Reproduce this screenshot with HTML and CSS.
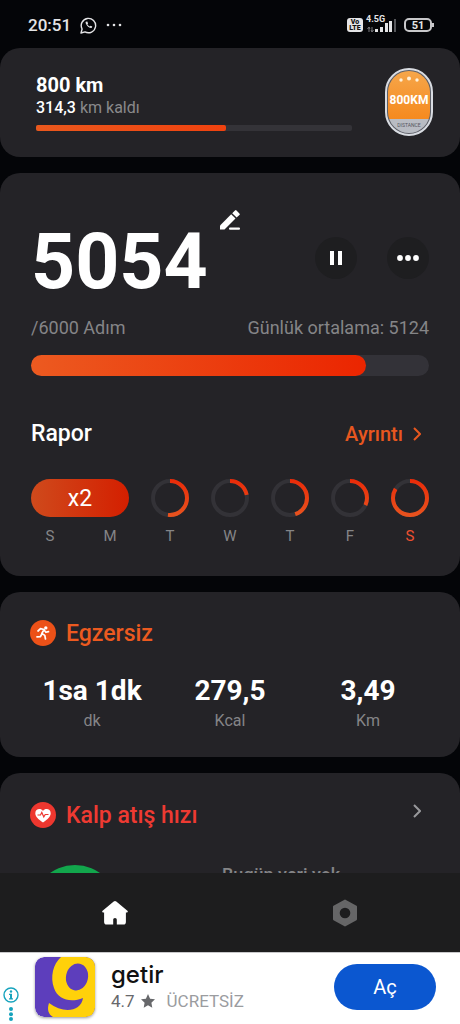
FILE: index.html
```html
<!DOCTYPE html>
<html lang="tr">
<head>
    <meta charset="UTF-8">
    <meta name="viewport" content="width=device-width, initial-scale=1.0">
    <title>Adım Sayar</title>
    <link rel="stylesheet" href="styles.css">
</head>
<body>
    <!-- shared gradient for the day rings -->
    <svg class="defs" width="0" height="0" aria-hidden="true">
        <linearGradient id="ring-gradient" gradientUnits="userSpaceOnUse" x1="0" y1="0" x2="38" y2="0">
            <stop offset="0" stop-color="#e8541f"/>
            <stop offset="1" stop-color="#ea2a08"/>
        </linearGradient>
    </svg>

    <header class="status-bar">
        <span class="status-time">20:51</span>
        <svg class="status-whatsapp" width="17" height="17" viewBox="0 0 17 17" fill="none" stroke="#e4e4e6" stroke-width="1.4">
            <path d="M1 16l1.100-4A7.200 7.200 0 1 1 5 14.900z" stroke-linejoin="round"/>
            <path d="M5.800 4.700c-1.300 1.500 3.300 7.200 5.800 6.200l.7-1.300-1.700-.9-.9.800c-1-.4-1.900-1.300-2.300-2.200l.7-.9-.8-1.800z" fill="#e4e4e6" stroke="none"/>
        </svg>
        <svg width="16" height="4" viewBox="0 0 16 4" fill="#e4e4e6">
            <circle cx="2" cy="2" r="1.300"/><circle cx="8" cy="2" r="1.300"/><circle cx="14" cy="2" r="1.300"/>
        </svg>
        <div class="status-right">
            <span class="volte">Vo<br>LTE</span>
            <div class="signal">
                <span class="signal-type">4.5G</span>
                <svg width="31" height="16" viewBox="0 0 31 16" fill="#e4e4e6">
                    <path d="M3 10v5M1.500 12L3 10l1 2M6 10v5M5 13l1 2 1.500-2" fill="none" stroke="#77777b"/>
                    <rect x="9" y="12" width="3" height="3"/>
                    <rect x="14" y="10" width="3" height="5"/>
                    <rect x="19" y="6" width="3" height="9"/>
                    <rect x="23" y="4" width="3" height="11"/>
                    <rect x="28" y="2" width="2" height="13" fill="#55565a"/>
                </svg>
            </div>
            <span class="battery">51</span>
        </div>
    </header>

    <main class="content">
        <section class="card goal">
            <div class="goal-info">
                <h2>800 km</h2>
                <p><b>314,3</b> km kaldı</p>
                <div class="goal-bar"><div class="goal-fill" style="width: 60%"></div></div>
            </div>
            <svg class="badge" width="48" height="68" viewBox="0 0 48 68" role="img" aria-label="800KM">
                <defs>
                    <linearGradient id="badge-orange" x1="0" y1="0" x2="0" y2="1">
                        <stop offset="0" stop-color="#f6a64a"/>
                        <stop offset="1" stop-color="#f58a1f"/>
                    </linearGradient>
                    <clipPath id="badge-clip"><rect x="3" y="3" width="42" height="62" rx="21"/></clipPath>
                </defs>
                <rect x="1" y="1" width="46" height="66" rx="23" fill="#5c5e66" stroke="#d9dce2" stroke-width="2"/>
                <g clip-path="url(#badge-clip)">
                    <rect x="3" y="3" width="42" height="48" fill="url(#badge-orange)"/>
                    <rect x="3" y="51" width="42" height="15" fill="#b9bcc3"/>
                </g>
                <circle cx="16" cy="12" r="1.700" fill="#fff0d8"/>
                <circle cx="24" cy="10.500" r="2" fill="#fff0d8"/>
                <circle cx="32" cy="12" r="1.700" fill="#fff0d8"/>
                <text class="badge-km" x="24" y="36" text-anchor="middle">800KM</text>
                <text class="badge-label" x="24" y="59" text-anchor="middle">DISTANCE</text>
            </svg>
        </section>

        <section class="card steps">
            <div class="steps-top">
                <h1 class="steps-count">5054</h1>
                <button type="button" class="edit-button" aria-label="Düzenle">
                    <svg width="20" height="20" viewBox="0 0 20 20" fill="#fff">
                        <path d="M0 15.500L11.200 4.300l4.300 4.300L4.500 19.600H0z"/>
                        <path d="M12.200 3.300l2.800-2.800a1 1 0 0 1 1.500 0l2.900 2.900a1 1 0 0 1 0 1.500l-2.800 2.700z"/>
                        <rect x="9" y="17.500" width="11" height="2.300" rx="1"/>
                    </svg>
                </button>
                <div class="steps-actions">
                    <button type="button" class="round-button" aria-label="Duraklat">
                        <svg width="14" height="14" viewBox="0 0 14 14" fill="#fff">
                            <rect x="1" y="0" width="4" height="14"/><rect x="9" y="0" width="4" height="14"/>
                        </svg>
                    </button>
                    <button type="button" class="round-button" aria-label="Diğer">
                        <svg width="22" height="6" viewBox="0 0 22 6" fill="#fff">
                            <circle cx="3" cy="3" r="2.900"/><circle cx="11" cy="3" r="2.900"/><circle cx="19" cy="3" r="2.900"/>
                        </svg>
                    </button>
                </div>
            </div>
            <div class="steps-meta">
                <span>/6000 Adım</span>
                <span>Günlük ortalama: 5124</span>
            </div>
            <div class="steps-bar"><div class="steps-fill" style="width: 84.2%"></div></div>

            <div class="report-head">
                <h2>Rapor</h2>
                <a href="#">Ayrıntı
                    <svg width="8" height="14" viewBox="0 0 8 14" fill="none" stroke="#e8571f" stroke-width="2"><path d="M1 1l6 6-6 6"/></svg>
                </a>
            </div>
            <div class="week">
                <div class="streak">x2</div>
                <svg class="ring" viewBox="0 0 38 38"><circle cx="19" cy="19" r="17"/><circle class="ring-value" cx="19" cy="19" r="17" pathLength="100" stroke-dasharray="52 100"/></svg>
                <svg class="ring" viewBox="0 0 38 38"><circle cx="19" cy="19" r="17"/><circle class="ring-value" cx="19" cy="19" r="17" pathLength="100" stroke-dasharray="22 100"/></svg>
                <svg class="ring" viewBox="0 0 38 38"><circle cx="19" cy="19" r="17"/><circle class="ring-value" cx="19" cy="19" r="17" pathLength="100" stroke-dasharray="45 100"/></svg>
                <svg class="ring" viewBox="0 0 38 38"><circle cx="19" cy="19" r="17"/><circle class="ring-value" cx="19" cy="19" r="17" pathLength="100" stroke-dasharray="32 100"/></svg>
                <svg class="ring" viewBox="0 0 38 38"><circle cx="19" cy="19" r="17"/><circle class="ring-value" cx="19" cy="19" r="17" pathLength="100" stroke-dasharray="84 100"/></svg>
                <span class="day">S</span>
                <span class="day">M</span>
                <span class="day">T</span>
                <span class="day">W</span>
                <span class="day">T</span>
                <span class="day">F</span>
                <span class="day today">S</span>
            </div>
        </section>

        <section class="card exercise">
            <div class="card-title">
                <svg width="26" height="26" viewBox="0 0 26 26">
                    <circle cx="13" cy="13" r="13" fill="#ec5118"/>
                    <circle cx="15.800" cy="7.900" r="1.700" fill="#fff"/>
                    <path d="M8 11l2.500-2.300 3.600.8-2.300 4 3 1.900.7 3.600M11.600 14.500l-1.300 2.200-3.300.2M14.300 10.300l1.600 2 2.600-.7" fill="none" stroke="#fff" stroke-width="1.700" stroke-linecap="round" stroke-linejoin="round"/>
                </svg>
                <h2>Egzersiz</h2>
            </div>
            <div class="stats">
                <div class="stat"><strong>1sa 1dk</strong><span>dk</span></div>
                <div class="stat"><strong>279,5</strong><span>Kcal</span></div>
                <div class="stat"><strong>3,49</strong><span>Km</span></div>
            </div>
        </section>

        <section class="card heart">
            <div class="card-title">
                <svg width="26" height="26" viewBox="0 0 26 26">
                    <circle cx="13" cy="13" r="13" fill="#ee372f"/>
                    <path d="M13 20.500C8 17 5.300 14.300 5.300 11.200c0-4.400 5.500-5.400 7.700-2.200 2.200-3.200 7.700-2.200 7.700 2.200 0 3.100-2.700 5.800-7.700 9.300z" fill="#fff"/>
                    <path d="M7.500 13h3l1.300-2.500 2 4.500 1.400-2.500h3.300" fill="none" stroke="#ee372f" stroke-width="1.200"/>
                </svg>
                <h2>Kalp atış hızı</h2>
                <svg class="chevron" width="8" height="14" viewBox="0 0 8 14" fill="none" stroke="#98989b" stroke-width="2"><path d="M1 1l6 6-6 6"/></svg>
            </div>
            <div class="heart-body">
                <div class="heart-dial"></div>
                <p>Bugün veri yok</p>
            </div>
        </section>
    </main>

    <nav class="tab-bar">
        <button type="button" aria-label="Ana sayfa">
            <svg width="26" height="24" viewBox="0 0 26 24" fill="#fff">
                <path d="M11.700.6a2 2 0 0 1 2.600 0L25.400 9.800c.8.8.4 1.600-.5 1.600h-1V21c0 1.700-.9 2.600-2.500 2.600h-6.600v-4.600c0-1.200-.7-1.900-1.800-1.900s-1.800.7-1.800 1.900v4.600H4.700c-1.600 0-2.600-.9-2.600-2.600v-9.600h-1c-.9 0-1.300-.8-.5-1.600z"/>
            </svg>
        </button>
        <button type="button" aria-label="Ayarlar">
            <svg width="26" height="28" viewBox="0 0 26 28">
                <path d="M13 1.500L24 7.700v12.600L13 26.500 2 20.300V7.700z" fill="#666667" stroke="#666667" stroke-width="2" stroke-linejoin="round"/>
                <circle cx="13" cy="14" r="5.300" fill="#1d1d1e"/>
            </svg>
        </button>
    </nav>

    <aside class="ad">
        <div class="ad-choices">
            <svg width="16" height="34" viewBox="0 0 16 34" fill="#16a3bd">
                <circle cx="8" cy="8" r="7" fill="none" stroke="#16a3bd" stroke-width="1.400"/>
                <circle cx="8" cy="4.500" r="1.200"/>
                <path d="M6 6.800h3v4.400h1v1.200H6v-1.200h1V8H6z"/>
                <circle cx="8" cy="22" r="2"/><circle cx="8" cy="27.200" r="2"/><circle cx="8" cy="32" r="2"/>
            </svg>
        </div>
        <svg class="ad-logo" width="60" height="60" viewBox="0 0 60 60" role="img" aria-label="getir">
            <defs><clipPath id="logo-clip"><rect width="60" height="60" rx="9"/></clipPath></defs>
            <g clip-path="url(#logo-clip)">
                <rect width="60" height="60" fill="#5d3ebc"/>
                <path d="M60 0H26C18 7 15 20 19 31c4 12 17 15 29 10-2 14-20 16-34 5-2 6-1 11 4 14h42z" fill="#ffd10a"/>
                <ellipse cx="42" cy="20" rx="11" ry="13.500" transform="rotate(12 42 20)" fill="#5d3ebc"/>
            </g>
        </svg>
        <div class="ad-text">
            <strong>getir</strong>
            <p>
                <span>4.7</span>
                <svg width="14" height="14" viewBox="0 0 14 14" fill="#67686b"><path d="M7 0l2.100 4.700 4.900.6-3.600 3.400.9 5L7 11.200l-4.300 2.500.9-5L0 5.300l4.900-.6z"/></svg>
                <span class="ad-price">ÜCRETSİZ</span>
            </p>
        </div>
        <button type="button" class="ad-button">Aç</button>
    </aside>
</body>
</html>
```
FILE: styles.css
```css
* {
    box-sizing: border-box;
}

body {
    margin: 0;
    height: 100vh;
    display: flex;
    flex-direction: column;
    background-color: #040508;
    color: #fff;
    font-family: Roboto, "Noto Sans", sans-serif;
    overflow: hidden;
}

h1, h2, p {
    margin: 0;
}

button {
    border: 0;
    padding: 0;
    background: none;
    font-family: inherit;
    cursor: pointer;
}

svg {
    display: block;
    flex: none;
}

.defs {
    position: absolute;
}

/* status bar */
.status-bar {
    flex: none;
    height: 48px;
    padding: 2px 28px 0;
    display: flex;
    align-items: center;
    gap: 9px;
    color: #e4e4e6;
}

.status-time {
    font-size: 17px;
    font-weight: 500;
}

.status-right {
    margin-left: auto;
    display: flex;
    align-items: center;
    gap: 3px;
}

.volte {
    width: 16px;
    padding: 1px 0;
    border-radius: 3px;
    background-color: #e4e4e6;
    color: #111;
    font-size: 7px;
    line-height: 6px;
    font-weight: 900;
    text-align: center;
}

.signal {
    position: relative;
}

.signal-type {
    position: absolute;
    top: -2px;
    left: 0;
    font-size: 9px;
    line-height: 9px;
    font-weight: 700;
}

.battery {
    position: relative;
    width: 28px;
    height: 14px;
    margin-left: 4px;
    border: 2px solid #c8c8ca;
    border-radius: 5px;
    font-size: 11px;
    line-height: 11px;
    font-weight: 700;
    text-align: center;
}

.battery::after {
    content: "";
    position: absolute;
    top: 3px;
    right: -4px;
    width: 2px;
    height: 4px;
    background-color: #c8c8ca;
}

/* cards */
.content {
    flex: 1;
    min-height: 0;
    overflow: hidden;
    display: flex;
    flex-direction: column;
    gap: 16px;
}

.card {
    flex: none;
    border-radius: 20px;
    background-color: #242327;
}

.card h2 {
    font-size: 23px;
    font-weight: 500;
}

.card-title {
    display: flex;
    align-items: center;
    gap: 10px;
    height: 32px;
}

/* distance goal */
.goal {
    display: flex;
    align-items: center;
    gap: 33px;
    padding: 20px 27px 21px 36px;
}

.goal-info {
    flex: 1;
}

.goal .goal-info h2 {
    font-size: 20px;
    line-height: 22px;
    font-weight: 700;
}

.goal-info p {
    margin: 2px 0 7px;
    font-size: 16px;
    line-height: 20px;
    color: #8a8a8c;
}

.goal-info b {
    font-weight: 500;
    color: #fff;
}

.goal-bar {
    height: 6px;
    border-radius: 2px;
    background-color: #343338;
}

.goal-fill {
    height: 100%;
    border-radius: 2px;
    background: linear-gradient(90deg, #ea581d, #f0420f);
}

.badge-km {
    font-size: 12px;
    font-weight: 700;
    fill: #fff;
}

.badge-label {
    font-size: 5px;
    fill: #55575e;
}

/* steps */
.steps {
    padding: 37px 31px 30px;
}

.steps-top {
    display: flex;
    height: 90px;
}

.steps-count {
    align-self: flex-end;
    font-size: 77px;
    line-height: 76px;
    font-weight: 700;
}

.edit-button {
    align-self: flex-start;
    margin-left: 12px;
}

.steps-actions {
    margin-left: auto;
    padding-top: 6px;
    display: flex;
    align-items: center;
    gap: 30px;
}

.round-button {
    width: 42px;
    height: 42px;
    border-radius: 50%;
    background-color: #1e1e20;
    display: grid;
    place-items: center;
}

.steps-meta {
    display: flex;
    justify-content: space-between;
    margin: 16px 0 15px;
    font-size: 18px;
    line-height: 24px;
    color: #858587;
}

.steps-bar {
    height: 21px;
    border-radius: 11px;
    background-color: #333238;
}

.steps-fill {
    height: 100%;
    border-radius: 11px;
    background: linear-gradient(90deg, #ec5a20, #eb2500);
}

.report-head {
    display: flex;
    justify-content: space-between;
    align-items: center;
    margin: 44px 0 31px;
    line-height: 28px;
}

.report-head a {
    display: flex;
    align-items: center;
    gap: 10px;
    padding-right: 8px;
    font-size: 20px;
    font-weight: 500;
    color: #e8571f;
    text-decoration: none;
}

.week {
    display: grid;
    grid-template-columns: repeat(7, 38px);
    justify-content: space-between;
    row-gap: 9px;
}

.streak {
    grid-column: span 2;
    height: 38px;
    border-radius: 19px;
    background: linear-gradient(90deg, #cf4a1c, #d41f00);
    font-size: 23px;
    line-height: 40px;
    text-align: center;
}

.ring {
    width: 38px;
    height: 38px;
    fill: none;
    stroke: #333237;
    stroke-width: 4;
    transform: rotate(-90deg);
}

.ring-value {
    stroke: url(#ring-gradient);
}

.day {
    font-size: 15px;
    line-height: 20px;
    text-align: center;
    color: #858587;
}

.today {
    color: #ee5030;
}

/* exercise */
.exercise {
    padding: 25px 23px 26px;
}

.exercise .card-title {
    padding-left: 7px;
    color: #ec5a20;
}

.stats {
    display: grid;
    grid-template-columns: repeat(3, 1fr);
    margin-top: 26px;
    text-align: center;
}

.stat strong,
.stat span {
    display: block;
}

.stat strong {
    font-size: 28px;
    line-height: 32px;
}

.stat span {
    margin-top: 4px;
    font-size: 16px;
    line-height: 20px;
    color: #858587;
}

/* heart rate */
.heart {
    padding: 26px 39px 26px 30px;
}

.heart .card-title {
    color: #ee3a32;
}

.chevron {
    margin-left: auto;
    margin-bottom: 8px;
}

.heart-body {
    display: grid;
    grid-template-columns: 86px 1fr;
    column-gap: 104px;
    padding-left: 2px;
    margin-top: 34px;
}

.heart-dial {
    height: 86px;
    border-radius: 50%;
    background-color: #12a64c;
}

.heart-body p {
    font-size: 18px;
    line-height: 20px;
    font-weight: 500;
    color: #858587;
}

/* bottom tabs */
.tab-bar {
    flex: none;
    display: grid;
    grid-template-columns: 1fr 1fr;
    height: 79px;
    background-color: #1d1d1e;
}

.tab-bar button {
    display: grid;
    place-items: center;
}

/* ad banner */
.ad {
    flex: none;
    display: flex;
    align-items: center;
    height: 72px;
    padding: 0 24px 3px 3px;
    border-top: 1px solid #c8c8ca;
    background-color: #fff;
    color: #111;
}

.ad-choices {
    align-self: flex-end;
}

.ad-logo {
    margin: 0 16px;
    border-radius: 9px;
    box-shadow: 0 1px 3px rgba(0, 0, 0, 0.4);
}

.ad-text strong {
    display: block;
    font-family: Inter, sans-serif;
    font-size: 24px;
    line-height: 28px;
    font-weight: 500;
}

.ad-text p {
    display: flex;
    align-items: center;
    gap: 6px;
    font-size: 17px;
    line-height: 24px;
    color: #67686b;
}

.ad-text .ad-price {
    margin-left: 6px;
    color: #9b9c9f;
}

.ad-button {
    margin-left: auto;
    width: 102px;
    height: 46px;
    border-radius: 23px;
    background-color: #0b57d0;
    color: #fff;
    font-size: 20px;
}
```
